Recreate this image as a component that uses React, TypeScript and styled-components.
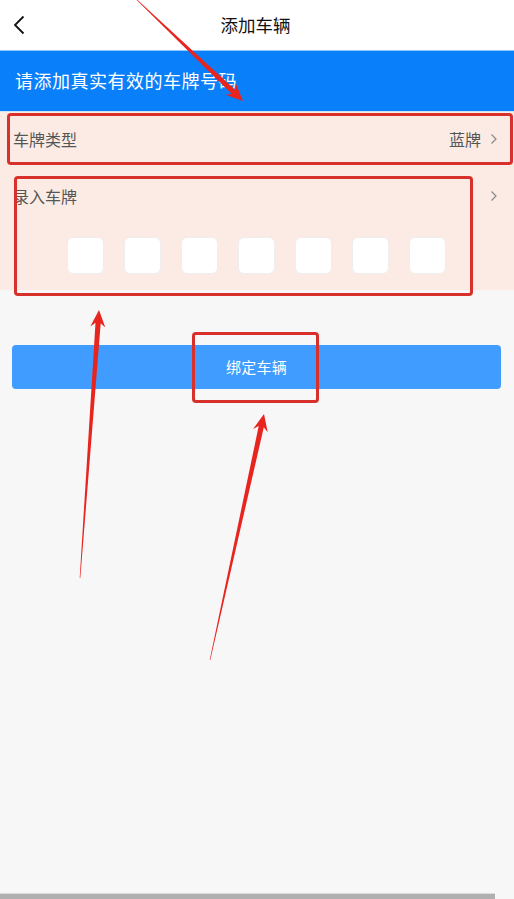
import React from "react";
import styled, { createGlobalStyle } from "styled-components";

const GlobalStyle = createGlobalStyle`
  html, body { margin: 0; padding: 0; background: #f7f7f7; }
  body { font-family: "Noto Sans CJK SC", "Noto Sans", sans-serif; }
  * { box-sizing: border-box; }
`;

const Page = styled.div`
  position: relative;
  width: 514px;
  height: 899px;
  overflow: hidden;
  display: flex;
  flex-direction: column;
  background: #f8f7f8;
`;

const Header = styled.header`
  height: 50px;
  background: #ffffff;
  display: grid;
  grid-template-columns: 50px 1fr 50px;
  align-items: center;
`;

const BackButton = styled.div`
  display: flex;
  align-items: center;
  padding-left: 12px;
  height: 100%;
`;

const Title = styled.h1`
  margin: 0;
  text-align: center;
  font-size: 17.5px;
  font-weight: 400;
  color: #111;
  line-height: 1;
  padding-bottom: 1px;
  padding-right: 3px;
`;

const Banner = styled.div`
  height: 61px;
  background: #0a7ffa;
  border-top: 1px solid #8fc8ff;
  display: flex;
  align-items: center;
  padding: 0 15px 2px;
  color: #fff;
  font-size: 18px;
  letter-spacing: 0.5px;
`;

const Section = styled.section`
  background: #fbebe4;
  border-top: 1px solid #cfe3f7;
  display: flex;
  flex-direction: column;
`;

const Row = styled.div`
  height: 54px;
  display: flex;
  align-items: center;
  justify-content: space-between;
  padding: 0 16px 0 13px;
  color: #555;
  font-size: 16px;
`;

const PlateRow = styled.div`
  height: 124px;
  display: flex;
  flex-direction: column;
  padding: 0 16px 0 13px;
`;

const PlateHeader = styled.div`
  height: 60px;
  display: flex;
  align-items: center;
  justify-content: space-between;
  color: #555;
  font-size: 16px;
`;

const Value = styled.span`
  display: flex;
  align-items: center;
  gap: 9px;
  color: #555;
`;

const Boxes = styled.div`
  display: flex;
  gap: 20px;
  padding-left: 54px;
  padding-top: 11px;
`;

const Box = styled.div`
  width: 37px;
  height: 37px;
  border-radius: 6px;
  background: #fff;
  border: 1px solid #eee;
`;

const ButtonWrap = styled.div`
  padding: 55px 13px 0 12px;
`;

const BindButton = styled.button`
  width: 100%;
  height: 44px;
  border: none;
  border-radius: 4px;
  background: #409cff;
  color: #fff;
  font-family: inherit;
  font-size: 15px;
  letter-spacing: 0.3px;
  padding-bottom: 2px;
`;

const Spacer = styled.div`
  flex: 1;
`;

const BottomBar = styled.div`
  height: 6px;
  width: 495px;
  background: #b0b0b0;
  border-top: 1px solid #dcdcdc;
`;

const Highlight = styled.div<{ $x: number; $y: number; $w: number; $h: number }>`
  position: absolute;
  left: ${(p) => p.$x}px;
  top: ${(p) => p.$y}px;
  width: ${(p) => p.$w}px;
  height: ${(p) => p.$h}px;
  border: 3px solid #d8302a;
  border-radius: 4px;
  pointer-events: none;
`;

const Overlay = styled.svg`
  position: absolute;
  left: 0;
  top: 0;
  width: 514px;
  height: 899px;
  pointer-events: none;
`;

const Chevron = () => (
  <svg width="8" height="12" viewBox="0 0 8 12">
    <path d="M1.5 1.5 L6 6 L1.5 10.5" fill="none" stroke="#888" strokeWidth="1.2" />
  </svg>
);

function arrowPoints(tx: number, ty: number, hx: number, hy: number): string {
  const dx = hx - tx;
  const dy = hy - ty;
  const len = Math.hypot(dx, dy);
  const ux = dx / len;
  const uy = dy / len;
  const nx = -uy;
  const ny = ux;
  const headLen = 17;
  const headW = 7.5;
  const shaftW = 2.6;
  const bx = hx - ux * headLen;
  const by = hy - uy * headLen;
  const nbx = hx - ux * (headLen - 4);
  const nby = hy - uy * (headLen - 4);
  const pts: [number, number][] = [
    [tx + nx * 0.3, ty + ny * 0.3],
    [nbx + nx * shaftW, nby + ny * shaftW],
    [bx + nx * headW, by + ny * headW],
    [hx, hy],
    [bx - nx * headW, by - ny * headW],
    [nbx - nx * shaftW, nby - ny * shaftW],
    [tx - nx * 0.3, ty - ny * 0.3],
  ];
  return pts.map((p) => `${p[0].toFixed(1)},${p[1].toFixed(1)}`).join(" ");
}

const arrows = [
  { t: [135, -2], h: [243, 101] },
  { t: [80, 578], h: [99, 310] },
  { t: [210, 660], h: [264, 414] },
];

export default function App() {
  return (
    <>
      <GlobalStyle />
      <Page>
        <Header>
          <BackButton>
            <svg width="14" height="20" viewBox="0 0 14 20">
              <path d="M11.5 1.5 L3 10 L11.5 18.5" fill="none" stroke="#111" strokeWidth="1.8" />
            </svg>
          </BackButton>
          <Title>添加车辆</Title>
          <div />
        </Header>
        <Banner>请添加真实有效的车牌号码</Banner>
        <Section>
          <Row>
            <span>车牌类型</span>
            <Value>
              蓝牌
              <Chevron />
            </Value>
          </Row>
          <PlateRow>
            <PlateHeader>
              <span>录入车牌</span>
              <Chevron />
            </PlateHeader>
            <Boxes>
              {Array.from({ length: 7 }).map((_, i) => (
                <Box key={i} />
              ))}
            </Boxes>
          </PlateRow>
        </Section>
        <ButtonWrap>
          <BindButton>绑定车辆</BindButton>
        </ButtonWrap>
        <Spacer />
        <BottomBar />

        <Highlight $x={7} $y={113} $w={506} $h={52} />
        <Highlight $x={14} $y={176} $w={459} $h={120} />
        <Highlight $x={192} $y={332} $w={127} $h={71} />
        <Overlay viewBox="0 0 514 899">
          {arrows.map((a, i) => (
            <polygon key={i} points={arrowPoints(a.t[0], a.t[1], a.h[0], a.h[1])} fill="#e8241f" />
          ))}
        </Overlay>
      </Page>
    </>
  );
}
